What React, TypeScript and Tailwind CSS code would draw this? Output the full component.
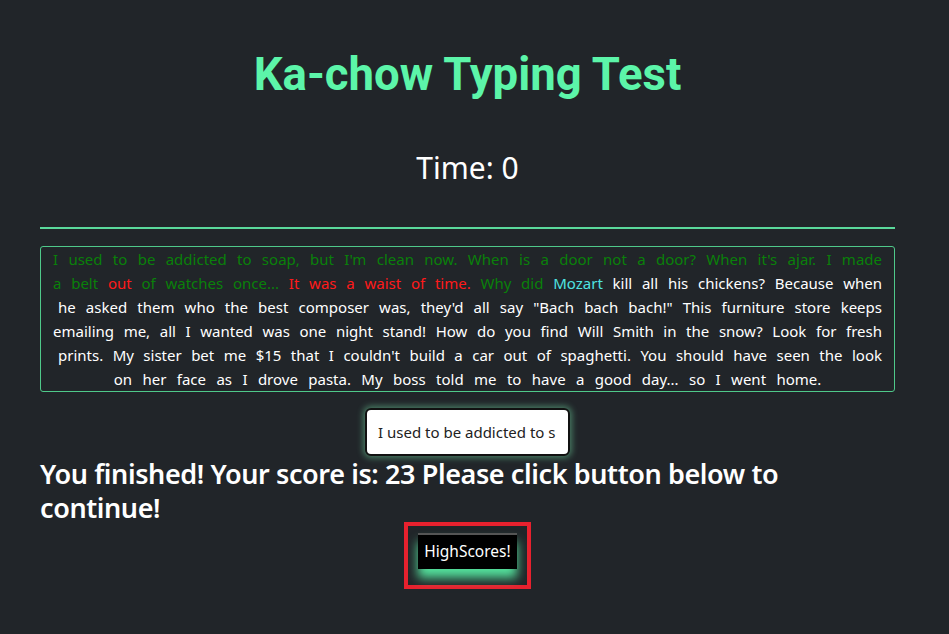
import React from "react";

const lines: { parts: { t: string; c: string }[]; pl?: string; last?: boolean }[] = [
  {
    parts: [
      {
        t: "I used to be addicted to soap, but I'm clean now. When is a door not a door? When it's ajar. I made",
        c: "text-[#0a800a]",
      },
    ],
  },
  {
    parts: [
      { t: "a belt ", c: "text-[#0a800a]" },
      { t: "out", c: "text-[#ff1a1a]" },
      { t: " of watches once... ", c: "text-[#0a800a]" },
      { t: "It was a waist of time.", c: "text-[#ff1a1a]" },
      { t: " Why did ", c: "text-[#0a800a]" },
      { t: "Mozart", c: "text-[#4fe3e0]" },
      { t: " kill all his chickens? Because when", c: "text-white" },
    ],
  },
  {
    pl: "pl-[5px]",
    parts: [
      {
        t: "he asked them who the best composer was, they'd all say \"Bach bach bach!\" This furniture store keeps",
        c: "text-white",
      },
    ],
  },
  {
    parts: [
      {
        t: "emailing me, all I wanted was one night stand! How do you find Will Smith in the snow?  Look for fresh",
        c: "text-white",
      },
    ],
  },
  {
    pl: "pl-[5px]",
    parts: [
      {
        t: "prints. My sister bet me $15 that I couldn't build a car out of spaghetti. You should have seen the look",
        c: "text-white",
      },
    ],
  },
  {
    last: true,
    parts: [
      {
        t: "on her face as I drove pasta. My boss told me to have a good day... so I went home.",
        c: "text-white",
      },
    ],
  },
];

export default function App() {
  return (
    <div
      className="min-h-[634px] w-full bg-[#212529] text-white"
      style={{ fontFamily: "'Noto Sans', 'Open Sans', sans-serif" }}
    >
      <div className="pl-[40px] pr-[54px] pt-[48px]">
        <h1
          className="text-center text-[45.5px] leading-[54px] font-bold text-[#5cf5a9]"
          style={{ fontFamily: "Roboto, 'Liberation Sans', sans-serif" }}
        >
          Ka-chow Typing Test
        </h1>
        <div className="mt-[47px] text-center text-[30px] leading-[38px] font-normal">
          Time: 0
        </div>
        <div className="mt-[40px] h-[2px] bg-[#5ad99b]" />
        <div className="mt-[17px] rounded-[3px] border border-[#4fc98a] px-[12px] text-[15px] leading-[24px]">
          {lines.map((l, i) => (
            <div
              key={i}
              className={`${l.pl ?? ""} ${l.last ? "text-center whitespace-nowrap [word-spacing:6.5px]" : "text-justify [text-align-last:justify]"}`}
            >
              {l.parts.map((p, j) => (
                <span key={j} className={p.c}>
                  {p.t}
                </span>
              ))}
            </div>
          ))}
        </div>
        <div className="mt-[16px] flex justify-center">
          <div className="flex h-[48px] w-[205px] items-center overflow-hidden rounded-[6px] border-2 border-[#111] bg-white px-[11px] shadow-[0_0_6px_2px_rgba(120,230,170,0.45)]">
            <span className="whitespace-nowrap text-[15px] text-[#222]">
              I used to be addicted to s
            </span>
          </div>
        </div>
        <h3 className="mt-[1px] text-[27px] leading-[34px] font-semibold tracking-[-0.4px] text-white">
          You finished! Your score is: 23 Please click button below to continue!
        </h3>
        <div className="-mt-[3px] flex justify-center">
          <div className="h-[67px] w-[127px] border-[4px] border-[#e8212e] pt-[7px] flex justify-center">
            <button className="h-[36px] w-[99px] border-t-2 border-[#555] bg-black text-[15.5px] text-white shadow-[0_9px_10px_rgba(90,245,168,0.9)]">
              HighScores!
            </button>
          </div>
        </div>
      </div>
    </div>
  );
}
